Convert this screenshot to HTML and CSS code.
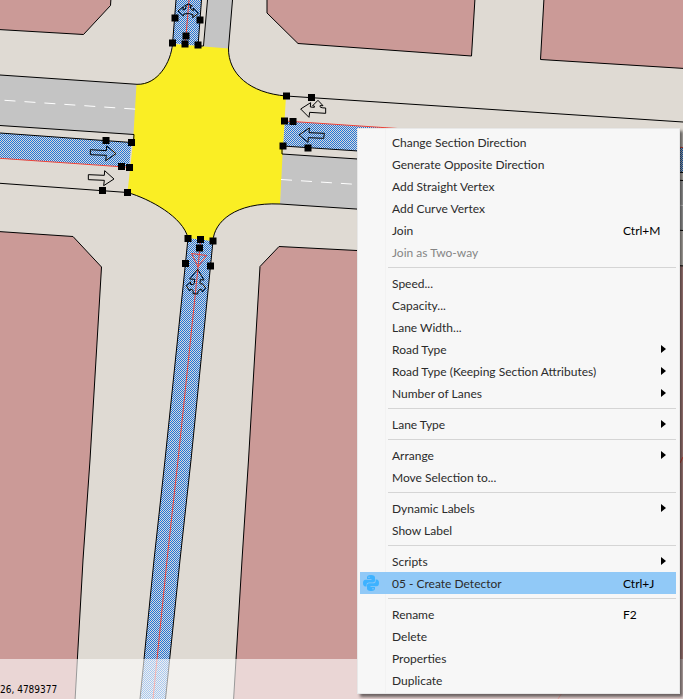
FILE: index.html
```html
<!DOCTYPE html>
<html lang="en">
<head>
<meta charset="utf-8">
<title>Network editor</title>
<link rel="stylesheet" href="styles.css">
</head>
<body>
<main class="editor">
  <svg class="map" viewBox="0 0 683 699" preserveAspectRatio="xMinYMin slice" aria-hidden="true">
    <defs>
      <pattern id="hatch" width="2" height="2" patternUnits="userSpaceOnUse">
        <path class="hatch-dot" d="M0 0h1v1h-1zM1 1h1v1h-1z"/>
      </pattern>
    </defs>

    <!-- city blocks -->
    <g class="block">
      <path d="M-2 29.5 83.500 34.500 110.500 5.500 111-2H-2z"/>
      <path d="M267-2V13L298 43.500 471.500 56 475-2z"/>
      <path d="M544-2 540.500 59.500 685 68.500V-2z"/>
      <path d="M-2 231.500 73 236.500 101.500 267 90 460 83 560 75 701H-2z"/>
      <path d="M685 266 357 250.500 279 246.500 260 266.500 248.500 460 242 560 233.500 701H685z"/>
    </g>

    <!-- unselected carriageways -->
    <g class="road">
      <path d="M0 75 137 84.500 134 134.500 0 125.500z"/>
      <path d="M207.500 0H232.500L228.500 49 204 47z"/>
      <path d="M282 154 683 180.500V230.500L280 204z"/>
    </g>

    <!-- selected sections -->
    <g fill="url(#hatch)">
      <path d="M0 133 131.500 142.500 129 167 0 158.500z"/>
      <path d="M176 0H201.500L198 46 172.500 43z"/>
      <path d="M285 121 683 147.500V172.500L283 146z"/>
      <path d="M188 238 213 241 191 460 180 560 165.500 699H140L154 560 165 460z"/>
    </g>

    <path class="junction" d="M173 44 228.500 48.500C228 74 250 93 286 96L283 146 280 204C235 202 214 222 213 241L188 238C183 217 150 199 127.500 192.500L133 142 136.500 84.500C158 84 171 62 173 44z"/>

    <g class="lane-mark">
      <path d="M4.500 100.300 136 109.200"/>
      <path d="M281 179.500 683 205.500"/>
    </g>

    <g class="edge">
      <path d="M0 75 137 84.300C158 85 171 62 172.500 44L176 0"/>
      <path d="M0 125.500 134 134.500 133.500 142"/>
      <path d="M0 133 131.500 142.500"/>
      <path d="M0 183.300 127.500 192.500C150 199 183 217 188 238L185.500 263 165 460 154 560 140 699"/>
      <path d="M201.500 0 198 46H203.500L207.500 0"/>
      <path d="M232.500 0 228.500 48C228 74 250 93 286 96L683 122"/>
      <path d="M283 146 683 172.500"/>
      <path d="M282 147V154L683 180.500"/>
      <path d="M683 230.500 280 204C235 202 214 222 213 241L210.500 266 191 460 180 560 165.500 699"/>
    </g>

    <g class="axis">
      <path d="M0 158.300 129 167.300"/>
      <path d="M189 0 186 36 185 44"/>
      <path d="M285 121 683 147.500"/>
      <path d="M200.500 240 198 268 178 460 167 560 153 699"/>
      <path d="M191.500 253.500 206.500 255.500 198 267z"/>
      <path d="M683 457 680 463M562 693 558 699"/>
    </g>

    <!-- turning arrows -->
    <g class="arrow" transform="scale(.33333)">
      <path d="M271 449 319 452 320 438 348 461 317 482 319 466 271 464z"/>
      <path d="M265 524 313 526 314 512 342 537 311 557 313 541 265 539z"/>
      <path d="M534 33 550 20 549 30Q558 30 559 18L554 17 566 12 577 18 570 18Q572 31 580 32L580 24 595 40 578 53 579 44Q566 38 552 42L550 48z"/>
      <path d="M977 324V340L929 337 927 352 902 327 932 308 931 321 943 322Q946 317 938 317L954 301 969 317 960 317Q957 324 977 324z"/>
      <path d="M973 400 971 415 925 413 924 427 897 405 928 384 927 398z"/>
      <path d="M593 808 612 840 601 839 600 850Q602 856 606 850L617 864 607 876 605 868Q594 866 593 882L579 881Q582 867 571 868L569 873 559 857 572 846 571 853Q582 857 583 849L584 838 569 837z"/>
    </g>

    <!-- vertex handles: zero-length strokes with square caps -->
    <path class="handle" d="M175 18h.01M200 20h.01M186 36h.01M172.500 43h.01M185 44h.01M198 45h.01M106 140.500h.01M131.500 142.500h.01M121.500 166.500h.01M129.500 167.500h.01M102.500 190.500h.01M127.500 192.500h.01M286.500 96h.01M311.500 97.500h.01M284.500 121h.01M293 121.500h.01M283 146h.01M308 148h.01M188 238.500h.01M200.500 239.500h.01M213 241h.01M199.500 248h.01M185.500 263.500h.01M210.500 266h.01"/>
  </svg>

  <footer class="status">26, 4789377</footer>

  <ul class="menu" role="menu">
    <li><button class="item" role="menuitem"><span class="label">Change Section Direction</span></button></li>
    <li><button class="item" role="menuitem"><span class="label">Generate Opposite Direction</span></button></li>
    <li><button class="item" role="menuitem"><span class="label">Add Straight Vertex</span></button></li>
    <li><button class="item" role="menuitem"><span class="label">Add Curve Vertex</span></button></li>
    <li><button class="item" role="menuitem"><span class="label">Join</span><kbd>Ctrl+M</kbd></button></li>
    <li><button class="item" role="menuitem" disabled><span class="label">Join as Two-way</span></button></li>
    <li class="separator" role="separator"></li>
    <li><button class="item" role="menuitem"><span class="label">Speed...</span></button></li>
    <li><button class="item" role="menuitem"><span class="label">Capacity...</span></button></li>
    <li><button class="item" role="menuitem"><span class="label">Lane Width...</span></button></li>
    <li><button class="item submenu" role="menuitem"><span class="label">Road Type</span></button></li>
    <li><button class="item submenu" role="menuitem"><span class="label">Road Type (Keeping Section Attributes)</span></button></li>
    <li><button class="item submenu" role="menuitem"><span class="label">Number of Lanes</span></button></li>
    <li class="separator" role="separator"></li>
    <li><button class="item submenu" role="menuitem"><span class="label">Lane Type</span></button></li>
    <li class="separator" role="separator"></li>
    <li><button class="item submenu" role="menuitem"><span class="label">Arrange</span></button></li>
    <li><button class="item" role="menuitem"><span class="label">Move Selection to...</span></button></li>
    <li class="separator" role="separator"></li>
    <li><button class="item submenu" role="menuitem"><span class="label">Dynamic Labels</span></button></li>
    <li><button class="item" role="menuitem"><span class="label">Show Label</span></button></li>
    <li class="separator" role="separator"></li>
    <li><button class="item submenu" role="menuitem"><span class="label">Scripts</span></button></li>
    <li><button class="item active" role="menuitem">
      <svg class="icon" viewBox="0 0 16 16" aria-hidden="true">
        <path class="snake" d="M8 0C5 0 4 1 4 2.500V4H8.500V4.700H2.500C.8 4.700 0 6 0 8S.8 11.500 2.500 11.500H3.600V9.700C3.600 8.300 4.600 7.500 6 7.500H10C11.200 7.500 12 6.700 12 5.500V2.500C12 1 10.800 0 8 0z"/>
        <path class="snake" d="M8 16C11 16 12 15 12 13.500V12H7.500V11.300H13.500C15.200 11.300 16 10 16 8S15.200 4.500 13.500 4.500H12.600V6.300C12.600 7.700 11.600 8.300 10 8.300H6C4.800 8.300 4 9.300 4 10.500V13.500C4 15 5.200 16 8 16z"/>
        <circle class="eye" cx="6" cy="2.200" r=".7"/>
        <circle class="eye" cx="10" cy="13.800" r=".7"/>
      </svg>
      <span class="label">05 - Create Detector</span><kbd>Ctrl+J</kbd></button></li>
    <li class="separator" role="separator"></li>
    <li><button class="item" role="menuitem"><span class="label">Rename</span><kbd>F2</kbd></button></li>
    <li><button class="item" role="menuitem"><span class="label">Delete</span></button></li>
    <li><button class="item" role="menuitem"><span class="label">Properties</span></button></li>
    <li><button class="item" role="menuitem"><span class="label">Duplicate</span></button></li>
  </ul>
</main>
</body>
</html>
```
FILE: styles.css
```css
* {
  box-sizing: border-box;
}

body {
  margin: 0;
  font-family: Lato, "Open Sans", sans-serif;
  font-size: 12px;
}

.editor {
  position: relative;
  display: grid;
  height: 100vh;
  overflow: hidden;
  background: #dfdad3;
}

/* map and status bar share one grid cell */
.map,
.status {
  grid-area: 1 / 1;
}

.map {
  display: block;
  width: 100%;
  height: 100%;
}

.block {
  fill: #cb9a97;
  stroke: #000;
}

.road {
  fill: #c4c4c4;
}

.junction {
  fill: #faee24;
}

.hatch-dot {
  fill: #1c74e0;
  shape-rendering: crispEdges;
}

.edge {
  fill: none;
  stroke: #000;
}

.axis {
  fill: none;
  stroke: #f04438;
}

.lane-mark {
  fill: none;
  stroke: #fff;
  stroke-dasharray: 11 9;
}

.arrow {
  fill: none;
  stroke: #000;
  stroke-width: 3;
}

.handle {
  stroke: #000;
  stroke-width: 7;
  stroke-linecap: square;
}

.status {
  align-self: end;
  height: 40px;
  padding: 24px 0 0;
  background: rgb(255 255 255 / 60%);
  color: #000;
  font: 10px/14px "DejaVu Sans Condensed", "DejaVu Sans", sans-serif;
}

.menu {
  position: absolute;
  top: 128px;
  right: 3px;
  width: 323px;
  margin: 0;
  padding: 2px;
  border: 1px solid #e8e8e8;
  background: linear-gradient(to right, #f7f7f7 27px, #f2f2f2 27px, #f2f2f2 28px, #f7f7f7 28px);
  box-shadow: 3px 3px 3px rgb(0 0 0 / 55%);
  list-style: none;
}

.item {
  display: flex;
  align-items: center;
  position: relative;
  width: 100%;
  height: 22px;
  padding: 2px 4px 0 32px;
  border: 0;
  background: none;
  color: #2b2b2b;
  font: inherit;
  line-height: 20px;
  text-align: left;
}

.menu li {
  padding-right: 1px;
}

.item:disabled {
  color: #858585;
}

.item.active {
  background: #91c9f7;
}

.label {
  flex: 1;
  white-space: nowrap;
}

kbd {
  width: 49px;
  color: #000;
  font: inherit;
}

.submenu::after {
  content: "";
  margin: 0 6px 2px 0;
  border: 4px solid transparent;
  border-left: 5px solid #000;
  border-right: 0;
}

.icon {
  position: absolute;
  top: 3px;
  left: 3px;
  width: 16px;
  height: 16px;
}

.snake {
  fill: #3db2ff;
}

.eye {
  fill: #91c9f7;
}

.menu .separator {
  height: 9px;
  padding: 4px 1px 0 28px;
}

.separator::before {
  content: "";
  display: block;
  height: 1px;
  background: #d5d5d5;
}
```
